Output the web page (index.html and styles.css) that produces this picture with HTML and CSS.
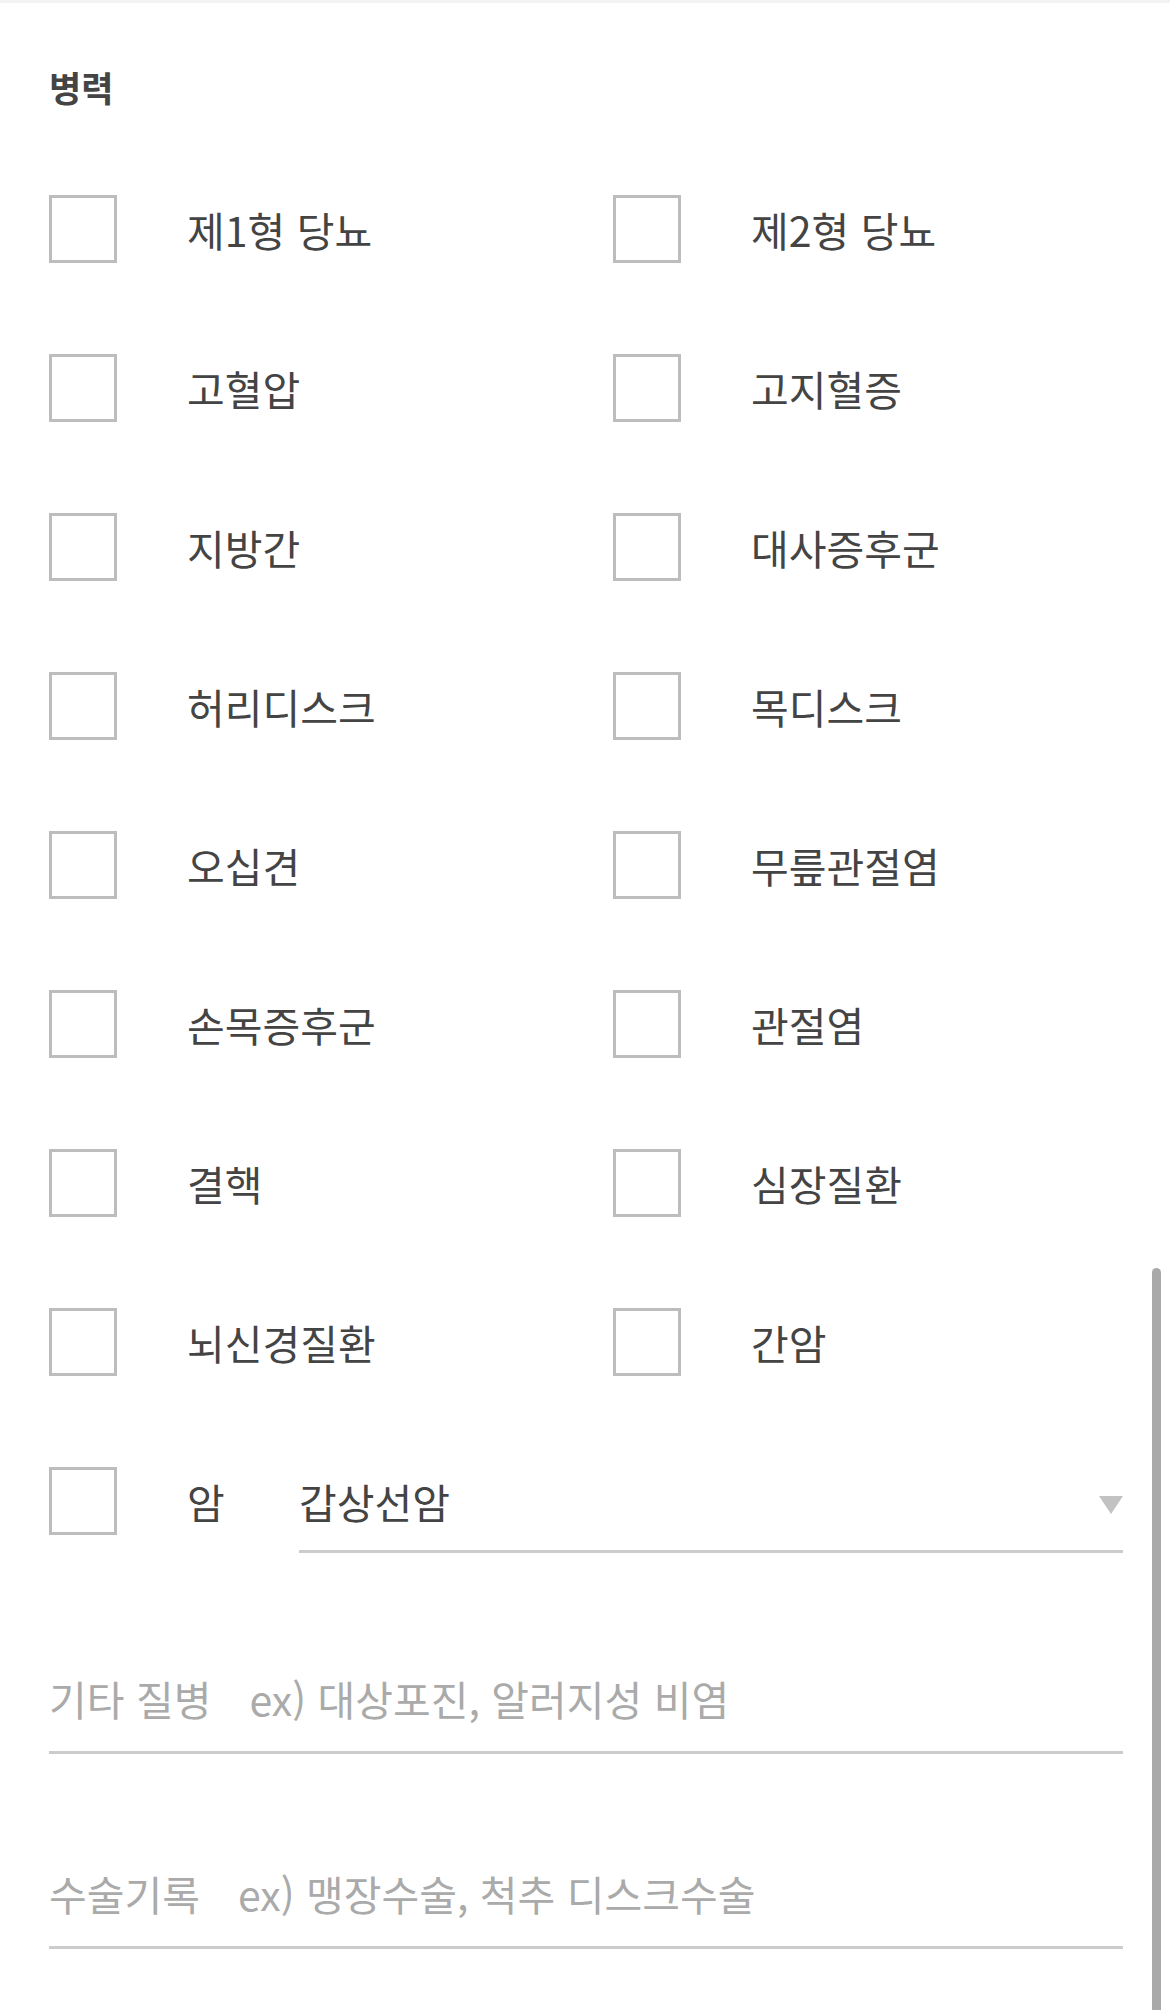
FILE: index.html
```html
<!DOCTYPE html>
<html lang="ko">
<head>
  <meta charset="UTF-8">
  <meta name="viewport" content="width=device-width, initial-scale=1.0">
  <title>병력</title>
  <link rel="stylesheet" href="styles.css">
</head>
<body>
  <div class="page">
    <h2 class="section-title">병력</h2>

    <!-- Disease checklist -->
    <div class="check-grid">
      <label class="check-item"><span class="box"></span><span class="check-text">제1형 당뇨</span></label>
      <label class="check-item"><span class="box"></span><span class="check-text">제2형 당뇨</span></label>
      <label class="check-item"><span class="box"></span><span class="check-text">고혈압</span></label>
      <label class="check-item"><span class="box"></span><span class="check-text">고지혈증</span></label>
      <label class="check-item"><span class="box"></span><span class="check-text">지방간</span></label>
      <label class="check-item"><span class="box"></span><span class="check-text">대사증후군</span></label>
      <label class="check-item"><span class="box"></span><span class="check-text">허리디스크</span></label>
      <label class="check-item"><span class="box"></span><span class="check-text">목디스크</span></label>
      <label class="check-item"><span class="box"></span><span class="check-text">오십견</span></label>
      <label class="check-item"><span class="box"></span><span class="check-text">무릎관절염</span></label>
      <label class="check-item"><span class="box"></span><span class="check-text">손목증후군</span></label>
      <label class="check-item"><span class="box"></span><span class="check-text">관절염</span></label>
      <label class="check-item"><span class="box"></span><span class="check-text">결핵</span></label>
      <label class="check-item"><span class="box"></span><span class="check-text">심장질환</span></label>
      <label class="check-item"><span class="box"></span><span class="check-text">뇌신경질환</span></label>
      <label class="check-item"><span class="box"></span><span class="check-text">간암</span></label>

      <div class="check-item cancer-row">
        <span class="box"></span>
        <span class="check-text cancer-label">암</span>
        <div class="select">
          <span class="select-value">갑상선암</span>
          <span class="caret"></span>
        </div>
      </div>
    </div>

    <!-- Free text fields -->
    <div class="field first">
      <span class="field-label">기타 질병</span>
      <input class="field-input" type="text" placeholder="ex) 대상포진, 알러지성 비염">
    </div>
    <div class="field">
      <span class="field-label">수술기록</span>
      <input class="field-input" type="text" placeholder="ex) 맹장수술, 척추 디스크수술">
    </div>
  </div>

  <div class="scrollbar"></div>
</body>
</html>
```

FILE: styles.css
```css
body {
  margin: 0;
  background: #fff;
  font-family: "Noto Sans CJK KR", "Noto Sans", sans-serif;
  color: #444;
  height: 2010px;
  overflow: hidden;
}

.page {
  border-top: 3px solid #f3f3f3;
  padding: 0 47px 0 49px;
}

.section-title {
  margin: 67px 0 0;
  font-size: 35px;
  line-height: 34px;
  font-weight: 700;
  color: #444;
}

/* Checklist */
.check-grid {
  display: grid;
  grid-template-columns: 564px 1fr;
  row-gap: 91px;
  margin-top: 91px;
}

.check-item {
  display: flex;
  align-items: center;
  cursor: pointer;
}

.box {
  flex: none;
  width: 62px;
  height: 62px;
  border: 3px solid #bdbdbd;
  background: #fff;
}

.check-text {
  margin-left: 70px;
  font-size: 41px;
  line-height: 68px;
  color: #444;
}

/* Cancer row with dropdown */
.cancer-row {
  grid-column: 1 / 3;
  align-items: flex-start;
}

.cancer-label {
  width: 112px;
}

.select {
  flex: 1;
  display: flex;
  align-items: center;
  justify-content: space-between;
  height: 68px;
  padding-bottom: 15px;
  border-bottom: 3px solid #ccc;
}

.select-value {
  font-size: 41px;
  line-height: 68px;
  color: #444;
}

.caret {
  width: 0;
  height: 0;
  border-left: 12px solid transparent;
  border-right: 12px solid transparent;
  border-top: 18px solid #c2c2c2;
  margin-top: 8px;
}

/* Text fields */
.field {
  display: flex;
  align-items: center;
  height: 60px;
  padding-bottom: 23px;
  border-bottom: 3px solid #ccc;
  margin-top: 109px;
}

.field.first {
  margin-top: 115px;
}

.field-label {
  flex: none;
  margin-right: 38px;
  font-size: 41px;
  color: #aaa;
}

.field-input {
  flex: 1;
  border: none;
  outline: none;
  padding: 0;
  background: transparent;
  font-family: inherit;
  font-size: 41px;
  color: #444;
}

.field-input::placeholder {
  color: #aaa;
}

/* Scroll indicator */
.scrollbar {
  position: fixed;
  top: 1268px;
  bottom: 0;
  right: 9px;
  width: 9px;
  border-radius: 5px 5px 0 0;
  background: #a9a9a9;
}
```
